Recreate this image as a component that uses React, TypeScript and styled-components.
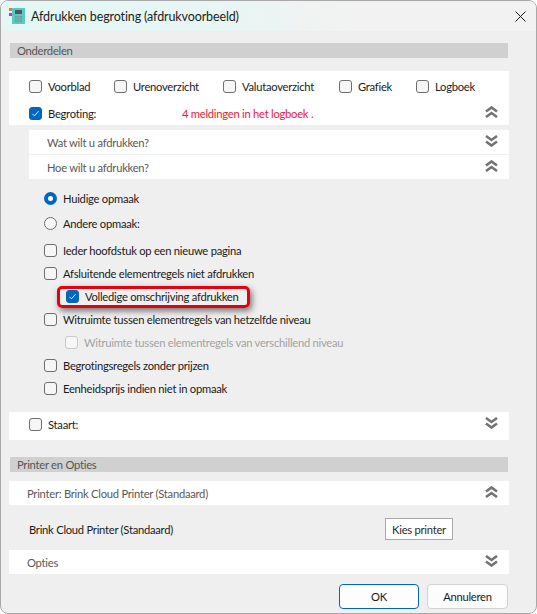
import { createGlobalStyle } from 'styled-components';
import styled from 'styled-components';

const GlobalStyle = createGlobalStyle`
	html, body {
		margin: 0;
		padding: 0;
		background: #ffffff;
	}
	* {
		box-sizing: border-box;
	}
`;

const Window = styled.div`
	width: 537px;
	height: 614px;
	border: 1px solid #a8a8a8;
	border-radius: 8px;
	background: #efefef;
	overflow: hidden;
	font-family: Lato, 'Noto Sans', sans-serif;
	font-size: 11.2px;
	letter-spacing: -0.25px;
	color: #1a1a1a;
`;

const TitleBar = styled.div`
	height: 30px;
	display: flex;
	align-items: center;
	padding: 0 10px 0 8px;
	background: linear-gradient(90deg, #e3f8f5 0%, #e8f6f4 40%, #f2f2f2 65%, #f2f2f2 100%);
`;

const TitleText = styled.div`
	margin-left: 5px;
	flex: 1;
	font-size: 12.5px;
	letter-spacing: -0.12px;
	color: #1c1c1c;
`;

const Content = styled.div`
	padding: 12px 27px 0 8px;
`;

const SectionBar = styled.div<{ $top?: number }>`
	height: 15px;
	margin: ${(p) => p.$top ?? 0}px 1px 0 1px;
	padding-left: 7px;
	background: #d0d0d0;
	color: #555555;
	line-height: 15px;
`;

const Panel = styled.div<{ $top: number; $height: number }>`
	margin-top: ${(p) => p.$top}px;
	height: ${(p) => p.$height}px;
	background: #ffffff;
	padding: 0 11px 0 20px;
`;

const TopPanel = styled(Panel)`
	padding-top: 3px;
	display: flex;
	flex-direction: column;
	gap: 3px;
`;

const TopGrid = styled.div`
	display: grid;
	grid-template-columns: 85px 109px 116px 77px auto;
	height: 24px;
	align-items: center;
`;

const FlexRow = styled.div<{ $spread?: boolean }>`
	display: flex;
	align-items: center;
	height: 24px;
	justify-content: ${(p) => (p.$spread ? 'space-between' : 'flex-start')};
`;

const Message = styled.span`
	color: #f5143c;
	flex: 1;
`;

const Indented = styled.div`
	margin-left: 20px;
`;

const FoldRow = styled.div<{ $top: number; $inset: number }>`
	height: 24px;
	margin-top: ${(p) => p.$top}px;
	padding: 0 11px 0 ${(p) => p.$inset}px;
	display: flex;
	align-items: center;
	justify-content: space-between;
	background: #ffffff;
	color: #595959;
`;

const Options = styled.div`
	padding: 7px 0 0 15px;
`;

const RadioRow = styled.div`
	height: 25px;
	display: flex;
	align-items: center;
	gap: 6px;
`;

const Radio = styled.span<{ $on?: boolean }>`
	width: 13px;
	height: 13px;
	border-radius: 50%;
	flex: none;
	background: ${(p) => (p.$on ? '#ffffff' : '#f6f6f6')};
	border: ${(p) => (p.$on ? '4px solid #0067c0' : '1px solid #6e6e6e')};
`;

const CheckList = styled.div`
	margin-top: 3px;
`;

const CheckRow = styled.div<{ $indent?: number }>`
	height: 23px;
	display: flex;
	align-items: center;
	padding-left: ${(p) => p.$indent ?? 0}px;
`;

const Label = styled.label<{ $muted?: boolean; $width?: number }>`
	display: inline-flex;
	align-items: center;
	gap: 6px;
	white-space: nowrap;
	color: ${(p) => (p.$muted ? '#a3a3a3' : 'inherit')};
	width: ${(p) => (p.$width ? `${p.$width}px` : 'auto')};
`;

const Box = styled.span<{ $on?: boolean; $muted?: boolean }>`
	width: 13px;
	height: 13px;
	border-radius: 3px;
	flex: none;
	display: inline-flex;
	align-items: center;
	justify-content: center;
	background: ${(p) => (p.$on ? '#0067c0' : p.$muted ? '#f7f7f7' : '#f6f6f6')};
	border: 1px solid ${(p) => (p.$on ? '#0067c0' : p.$muted ? '#c9c9c9' : '#6e6e6e')};
`;

const Highlight = styled.div`
	margin-left: 13px;
	height: 22px;
	width: 193px;
	padding-left: 6px;
	display: flex;
	align-items: center;
	border: 3px solid #e6000b;
	border-radius: 5px;
	box-shadow: 2px 3px 6px rgba(50, 50, 50, 0.65);
`;

const PrinterBody = styled.div`
	height: 45px;
	padding: 3px 56px 0 20px;
	display: flex;
	align-items: center;
	justify-content: space-between;
`;

const PickButton = styled.button`
	width: 68px;
	height: 22px;
	padding: 0;
	border: 1px solid #a9a9a9;
	background: #ffffff;
	font: inherit;
	letter-spacing: inherit;
	color: #2b2b2b;
`;

const Footer = styled.div`
	display: flex;
	justify-content: flex-end;
	gap: 8px;
	margin: 10px 1px 0 0;
`;

const DialogButton = styled.button<{ $primary?: boolean }>`
	width: ${(p) => (p.$primary ? 80 : 81)}px;
	height: 25px;
	padding: 0;
	border-radius: 4px;
	background: #fdfdfd;
	border: 1px solid ${(p) => (p.$primary ? '#0067c0' : '#d2d2d2')};
	font: inherit;
	letter-spacing: inherit;
	color: #1a1a1a;
`;

const ChevronSvg = styled.svg<{ $up?: boolean }>`
	width: 13px;
	height: 12px;
	flex: none;
	margin-bottom: 2px;
	transform: ${(p) => (p.$up ? 'none' : 'scaleY(-1)')};
`;

const CalculatorIcon = () => (
	<svg width="17" height="17" viewBox="0 0 17 17">
		<rect x="3" y="0" width="13" height="16" fill="#5cc9c1" />
		<rect x="6" y="2" width="7" height="4" fill="#4c5a5c" />
		<rect x="6" y="8" width="7" height="6" fill="#6f9a98" />
		<path d="M8 8v6M10.5 8v6M6 10h7M6 12h7" stroke="#5cc9c1" strokeWidth="0.7" />
		<rect x="0" y="0" width="3" height="3" fill="#f0704a" />
		<rect x="0" y="5" width="3" height="3" fill="#e21fe0" />
	</svg>
);

const CloseIcon = () => (
	<svg width="11" height="11" viewBox="0 0 11 11">
		<path d="M0.5 0.5l10 10M10.5 0.5l-10 10" stroke="#1a1a1a" strokeWidth="1" fill="none" />
	</svg>
);

const Tick = () => (
	<svg width="9" height="9" viewBox="0 0 9 9">
		<path d="M1.5 4.8l2 2 4-4.6" stroke="#ffffff" strokeWidth="0.9" fill="none" />
	</svg>
);

const Chevrons = ({ up }: { up?: boolean }) => (
	<ChevronSvg $up={up} viewBox="0 0 13 12">
		<path d="M1 5.5L6.5 1.5L12 5.5M1 11L6.5 7L12 11" stroke="#737373" strokeWidth="2.6" fill="none" />
	</ChevronSvg>
);

const Check = ({ text, on, muted, width }: { text: string; on?: boolean; muted?: boolean; width?: number }) => (
	<Label $muted={muted} $width={width}>
		<Box $on={on} $muted={muted}>
			{on && <Tick />}
		</Box>
		{text}
	</Label>
);

const App = () => {
	return (
		<Window>
			<GlobalStyle />
			<TitleBar>
				<CalculatorIcon />
				<TitleText>Afdrukken begroting (afdrukvoorbeeld)</TitleText>
				<CloseIcon />
			</TitleBar>
			<Content>
				<SectionBar>Onderdelen</SectionBar>
				<TopPanel $top={13} $height={54}>
					<TopGrid>
						<Check text="Voorblad" />
						<Check text="Urenoverzicht" />
						<Check text="Valutaoverzicht" />
						<Check text="Grafiek" />
						<Check text="Logboek" />
					</TopGrid>
					<FlexRow>
						<Check text="Begroting:" on width={153} />
						<Message>4 meldingen in het logboek .</Message>
						<Chevrons up />
					</FlexRow>
				</TopPanel>
				<Indented>
					<FoldRow $top={5} $inset={18}>
						Wat wilt u afdrukken?
						<Chevrons />
					</FoldRow>
					<FoldRow $top={1} $inset={18}>
						Hoe wilt u afdrukken?
						<Chevrons up />
					</FoldRow>
					<Options>
						<RadioRow>
							<Radio $on />
							Huidige opmaak
						</RadioRow>
						<RadioRow>
							<Radio />
							Andere opmaak:
						</RadioRow>
						<CheckList>
							<CheckRow>
								<Check text="Ieder hoofdstuk op een nieuwe pagina" />
							</CheckRow>
							<CheckRow>
								<Check text="Afsluitende elementregels niet afdrukken" />
							</CheckRow>
							<CheckRow>
								<Highlight>
									<Check text="Volledige omschrijving afdrukken" on />
								</Highlight>
							</CheckRow>
							<CheckRow>
								<Check text="Witruimte tussen elementregels van hetzelfde niveau" />
							</CheckRow>
							<CheckRow $indent={21}>
								<Check text="Witruimte tussen elementregels van verschillend niveau" muted />
							</CheckRow>
							<CheckRow>
								<Check text="Begrotingsregels zonder prijzen" />
							</CheckRow>
							<CheckRow>
								<Check text="Eenheidsprijs indien niet in opmaak" />
							</CheckRow>
						</CheckList>
					</Options>
				</Indented>
				<Panel $top={12} $height={28}>
					<FlexRow $spread>
						<Check text="Staart:" />
						<Chevrons />
					</FlexRow>
				</Panel>
				<SectionBar $top={17}>Printer en Opties</SectionBar>
				<FoldRow $top={9} $inset={18}>
					Printer: Brink Cloud Printer (Standaard)
					<Chevrons up />
				</FoldRow>
				<PrinterBody>
					Brink Cloud Printer (Standaard)
					<PickButton>Kies printer</PickButton>
				</PrinterBody>
				<FoldRow $top={0} $inset={18}>
					Opties
					<Chevrons />
				</FoldRow>
				<Footer>
					<DialogButton $primary>OK</DialogButton>
					<DialogButton>Annuleren</DialogButton>
				</Footer>
			</Content>
		</Window>
	);
};

export default App;
